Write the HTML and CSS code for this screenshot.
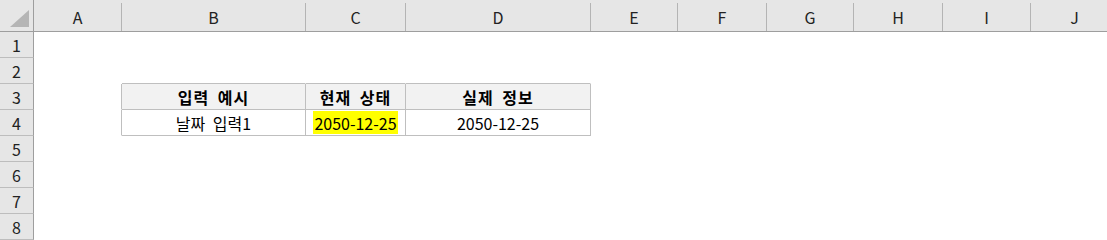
FILE: index.html
```html
<!doctype html>
<html>
<head>
  <meta charset="utf-8">
  <link rel="stylesheet" href="styles.css">
</head>
<body>
  <div class="sheet">
    <!-- column headers -->
    <div class="corner">
      <svg width="34" height="32" viewBox="0 0 34 32"><polygon points="29,10 29,27 10,27" fill="#b5b5b5"/></svg>
    </div>
    <div class="colhead"><div class="lab">A</div></div>
    <div class="colhead"><div class="lab">B</div></div>
    <div class="colhead"><div class="lab">C</div></div>
    <div class="colhead"><div class="lab">D</div></div>
    <div class="colhead"><div class="lab">E</div></div>
    <div class="colhead"><div class="lab">F</div></div>
    <div class="colhead"><div class="lab">G</div></div>
    <div class="colhead"><div class="lab">H</div></div>
    <div class="colhead"><div class="lab">I</div></div>
    <div class="colhead"><div class="lab">J</div></div>

    <!-- row 1 -->
    <div class="rowhead">1</div>
    <div class="cell"></div><div class="cell"></div><div class="cell"></div><div class="cell"></div><div class="cell"></div><div class="cell"></div><div class="cell"></div><div class="cell"></div><div class="cell"></div><div class="cell"></div>

    <!-- row 2 -->
    <div class="rowhead">2</div>
    <div class="cell"></div><div class="cell bb"></div><div class="cell bb"></div><div class="cell bb"></div><div class="cell"></div><div class="cell"></div><div class="cell"></div><div class="cell"></div><div class="cell"></div><div class="cell"></div>

    <!-- row 3 -->
    <div class="rowhead">3</div>
    <div class="cell br"></div>
    <div class="cell th bb br">입력 예시</div>
    <div class="cell th bb br">현재 상태</div>
    <div class="cell th bb br">실제 정보</div>
    <div class="cell"></div><div class="cell"></div><div class="cell"></div><div class="cell"></div><div class="cell"></div><div class="cell"></div>

    <!-- row 4 -->
    <div class="rowhead">4</div>
    <div class="cell br"></div>
    <div class="cell td bb br">날짜 입력1</div>
    <div class="cell td bb br"><span class="mark">2050-12-25</span></div>
    <div class="cell td bb br">2050-12-25</div>
    <div class="cell"></div><div class="cell"></div><div class="cell"></div><div class="cell"></div><div class="cell"></div><div class="cell"></div>

    <div class="rowhead">5</div>
    <div class="cell"></div><div class="cell"></div><div class="cell"></div><div class="cell"></div><div class="cell"></div><div class="cell"></div><div class="cell"></div><div class="cell"></div><div class="cell"></div><div class="cell"></div>
    <div class="rowhead">6</div>
    <div class="cell"></div><div class="cell"></div><div class="cell"></div><div class="cell"></div><div class="cell"></div><div class="cell"></div><div class="cell"></div><div class="cell"></div><div class="cell"></div><div class="cell"></div>
    <div class="rowhead">7</div>
    <div class="cell"></div><div class="cell"></div><div class="cell"></div><div class="cell"></div><div class="cell"></div><div class="cell"></div><div class="cell"></div><div class="cell"></div><div class="cell"></div><div class="cell"></div>
    <div class="rowhead">8</div>
    <div class="cell"></div><div class="cell"></div><div class="cell"></div><div class="cell"></div><div class="cell"></div><div class="cell"></div><div class="cell"></div><div class="cell"></div><div class="cell"></div><div class="cell"></div>
  </div>
</body>
</html>
```

FILE: styles.css
```css
body{
  margin:0;
  background:#ffffff;
  font-family: "Noto Sans CJK KR", "Noto Sans", sans-serif;
  font-size:16px;
  color:#000000;
  overflow:hidden;
}
.sheet{
  display:grid;
  grid-template-columns: 34px 88px 184px 100px 185px 87px 89px 87px 89px 88px 88px;
  grid-template-rows: 32px repeat(8, 26px);
  width:1119px;
}
.corner{
  background:#e6e6e6;
  border-right:1px solid #9e9e9e;
  border-bottom:1px solid #9e9e9e;
  box-sizing:border-box;
}
.corner svg{
  display:block;
}
.colhead{
  background:#e6e6e6;
  border-bottom:1px solid #9e9e9e;
  box-sizing:border-box;
  padding-top:3px;
}
.colhead .lab{
  height:100%;
  border-right:1px solid #b4b4b4;
  box-sizing:border-box;
  display:flex;
  align-items:center;
  justify-content:center;
  color:#222222;
  line-height:1;
}
.rowhead{
  background:#e6e6e6;
  border-right:1px solid #9e9e9e;
  border-bottom:1px solid #bdbdbd;
  box-sizing:border-box;
  display:flex;
  align-items:center;
  justify-content:center;
  color:#222222;
  line-height:1;
}
.cell{
  box-sizing:border-box;
  border-right:1px solid #ffffff;
  border-bottom:1px solid #ffffff;
  display:flex;
  align-items:center;
  justify-content:center;
  line-height:1;
  white-space:nowrap;
  word-spacing:4px;
}
.bb{
  border-bottom-color:#bfbfbf;
}
.br{
  border-right-color:#bfbfbf;
}
.th{
  background:#f2f2f2;
  font-weight:bold;
  letter-spacing:1px;
}
.td{
  background:#ffffff;
}
.mark{
  background:#ffff00;
  padding:4px 1px 3px 1px;
}
```
